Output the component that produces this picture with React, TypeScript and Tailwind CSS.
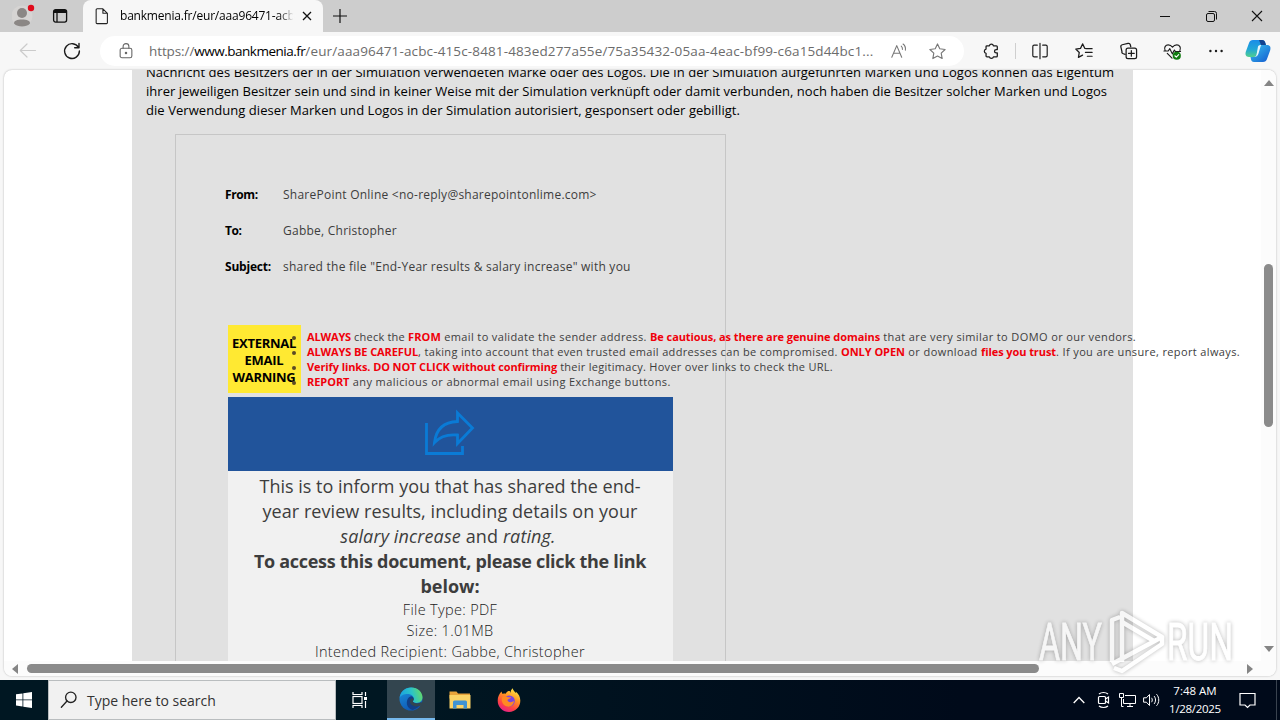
import type { ReactNode } from 'react';
import clsx from 'clsx';

interface Segment {
  text: string;
  tracking: string;
  alert?: boolean;
}

const warnings: Segment[][] = [
  [
    { text: 'ALWAYS', tracking: 'tracking-[-0.158px]', alert: true },
    { text: ' check the ', tracking: 'tracking-[0.213px]' },
    { text: 'FROM', tracking: 'tracking-[0.144px]', alert: true },
    { text: ' email to validate the sender address. ', tracking: 'tracking-[0.367px]' },
    { text: 'Be cautious, as there are genuine domains', tracking: 'tracking-[-0.076px]', alert: true },
    { text: ' that are very similar to DOMO or our vendors.', tracking: 'tracking-[0.388px]' },
  ],
  [
    { text: 'ALWAYS BE CAREFUL', tracking: 'tracking-[-0.106px]', alert: true },
    { text: ', taking into account that even trusted email addresses can be compromised. ', tracking: 'tracking-[0.344px]' },
    { text: 'ONLY OPEN', tracking: 'tracking-[-0.044px]', alert: true },
    { text: ' or download ', tracking: 'tracking-[0.42px]' },
    { text: 'files you trust', tracking: 'tracking-[-0.079px]', alert: true },
    { text: '. If you are unsure, report always.', tracking: 'tracking-[0.369px]' },
  ],
  [
    { text: 'Verify links. DO NOT CLICK without confirming', tracking: 'tracking-[-0.104px]', alert: true },
    { text: ' their legitimacy. Hover over links to check the URL.', tracking: 'tracking-[0.278px]' },
  ],
  [
    { text: 'REPORT', tracking: 'tracking-[-0.05px]', alert: true },
    { text: ' any malicious or abnormal email using Exchange buttons.', tracking: 'tracking-[0.42px]' },
  ],
];

const headers = [
  { label: 'From:', value: 'SharePoint Online <no-reply@sharepointonlime.com>', labelTracking: 'tracking-[-0.4px]' },
  { label: 'To:', value: 'Gabbe, Christopher', labelTracking: 'tracking-[-0.4px]' },
  { label: 'Subject:', value: 'shared the file "End-Year results & salary increase" with you', labelTracking: 'tracking-[-0.205px]' },
];

function Icon({ children, size = 20, className }: { children: ReactNode; size?: number; className?: string }) {
  return (
    <svg
      width={size}
      height={size}
      viewBox="0 0 20 20"
      fill="none"
      stroke="currentColor"
      strokeWidth="1.2"
      strokeLinecap="round"
      strokeLinejoin="round"
      className={clsx('shrink-0', className)}
    >
      {children}
    </svg>
  );
}

function TabStrip() {
  return (
    <div className="flex h-8 shrink-0 bg-[#cdcdcd]">
      <div className="flex w-[83px] items-center rounded-br-md bg-[#cdcdcd] pl-[12px]">
        <svg width="24" height="28" viewBox="0 0 24 28" className="shrink-0">
          <circle cx="10" cy="14" r="10.5" fill="#d6d4d3" />
          <circle cx="10" cy="11" r="5" fill="#8b8785" />
          <path d="M2 21.5c0-3 3-4 8-4s8 1 8 4c-2 2.200-5 3-8 3s-6-.8-8-3z" fill="#8b8785" />
          <circle cx="19" cy="6" r="3.200" fill="#e00b1c" />
        </svg>
        <svg width="16" height="16" viewBox="0 0 16 16" fill="none" stroke="#111" className="ml-[16px] shrink-0">
          <rect x="1.600" y="1.600" width="13" height="12.500" rx="2" strokeWidth="1.300" />
          <path d="M2 3.500h12.500" strokeWidth="3" />
          <path d="M5 4v10" strokeWidth="1.300" />
        </svg>
      </div>
      <div className="flex w-[240px] items-center rounded-t-lg bg-[#f7f7f7] pl-[10px]">
        <Icon size={18} className="text-[#222]">
          <path d="M4.500 2h6.500l5 5v10.500a1 1 0 0 1-1 1H4.500a1 1 0 0 1-1-1V3a1 1 0 0 1 1-1zM11 2v5h5" />
        </Icon>
        <span className="ml-[9px] w-[177px] overflow-hidden whitespace-nowrap bg-gradient-to-r from-black from-88% to-[#f7f7f7] to-98% bg-clip-text text-xs tracking-[-0.2px] text-transparent">
          bankmenia.fr/eur/aaa96471-acbc
        </span>
        <svg width="10" height="10" viewBox="0 0 10 10" stroke="#111" strokeWidth="1.300" className="ml-[5px] shrink-0">
          <path d="M1 1l8 8M9 1l-8 8" />
        </svg>
      </div>
      <div className="flex flex-1 items-center rounded-bl-md pl-[10px]">
        <svg width="14" height="14" viewBox="0 0 14 14" stroke="#111" strokeWidth="1.200">
          <path d="M7 0v14M0 7h14" />
        </svg>
      </div>
      <div className="flex items-center pr-[17px] text-[#111]">
        <svg width="10" height="10" viewBox="0 0 10 10" stroke="currentColor">
          <path d="M0 5.500h10" />
        </svg>
        <svg width="11" height="11" viewBox="0 0 11 11" fill="none" stroke="currentColor" className="ml-[36px]">
          <rect x=".5" y="2.500" width="8" height="8" rx="1.500" />
          <path d="M2.500.5h6a2 2 0 0 1 2 2v6" />
        </svg>
        <svg width="12" height="12" viewBox="0 0 12 12" stroke="currentColor" strokeWidth="1.100" className="ml-[34px]">
          <path d="M1 1l10 10M11 1L1 11" />
        </svg>
      </div>
    </div>
  );
}

function AddressBar() {
  return (
    <div className="flex h-[38px] shrink-0 items-center bg-[#f7f7f7] text-[#1b1b1b]">
      <Icon className="ml-[18px] text-[#cbcbcb]">
        <path d="M17.500 9.500h-15M9 3L2.300 9.500 9 16" />
      </Icon>
      <Icon className="ml-[24px]">
        <path d="M16.500 6.500A7.400 7.400 0 1 0 17.400 10M17 2.500v4.300h-4.300" strokeWidth="1.400" />
      </Icon>
      <div className="ml-[18px] flex h-[30px] w-[864px] items-center rounded-full bg-white pl-[17px]">
        <Icon size={18} className="text-[#666]">
          <rect x="3.500" y="7" width="13" height="10.500" rx="2" />
          <path d="M6.800 7V5a3.200 3.200 0 0 1 6.400 0v2" />
          <circle cx="10" cy="12.300" r=".8" fill="currentColor" />
        </Icon>
        <div className="ml-[14px] w-[726px] whitespace-nowrap text-[13.5px] text-[#6c6c6c]">
          <span className="tracking-[-0.1px]">https://</span>
          <span className="tracking-[-0.49px] text-black">www.bankmenia.fr</span>
          <span className="tracking-[0.133px]">/eur/aaa96471-acbc-415c-8481-483ed277a55e/75a35432-05aa-4eac-bf99-c6a15d44bc1...</span>
        </div>
        <Icon size={18} className="ml-[15px] text-[#777]">
          <path d="M2 17L7.500 4 13 17M4 12.500h7M12.500 4.500c1 .8 1.500 2.200 1.300 3.700M14.500 2.200c2 1.500 3 4 2.600 6.800" />
        </Icon>
        <Icon size={19} className="ml-[20px] text-[#777]">
          <path d="M10 2l2.400 5.100 5.600.8-4.100 3.900 1 5.600-4.900-2.700-4.900 2.700 1-5.600L2 7.900l5.600-.8z" />
        </Icon>
      </div>
      {/* extensions */}
      <Icon size={18} className="ml-[18px]">
        <path
          strokeWidth="1.400"
          d="M5.500 4.200h2.700a2.300 2.300 0 0 1 4.500 0h3.300a1 1 0 0 1 1 1v3.200h-1.200a1.900 1.900 0 0 0 0 3.800H17v3.300a1 1 0 0 1-1 1h-3.300a2.300 2.300 0 0 1-4.500 0H5.500a1 1 0 0 1-1-1v-2.900a2.400 2.400 0 0 1 0-4.700V5.200a1 1 0 0 1 1-1z"
        />
      </Icon>
      <div className="ml-[15px] h-4 w-px bg-[#cfcfcf]" />
      <Icon size={18} className="ml-[15px]">
        <path strokeWidth="1.300" d="M7 3.500H3.500a1.500 1.500 0 0 0-1.500 1.500v10a1.500 1.500 0 0 0 1.500 1.500H7M13 3.500h3.500A1.500 1.500 0 0 1 18 5v10a1.500 1.500 0 0 1-1.500 1.500H13M10 1.500v17" />
      </Icon>
      <Icon size={19} className="ml-[26px]">
        <path strokeWidth="1.300" d="M12 7L10.400 6.800 8 2 5.800 6.700.8 7.400l3.700 3.600-.9 5.200L8 13.800M12.500 7H18M11 11h7M13 15h5" />
      </Icon>
      <Icon size={19} className="ml-[25px]">
        <path strokeWidth="1.300" d="M6.500 13l-2-.6a2 2 0 0 1-1.400-2.400L2 5.300a2 2 0 0 1 1.400-2.400L9.500 1.500a2 2 0 0 1 2.400 1.400l.5 2.100" />
        <rect x="7.500" y="6.500" width="11" height="11" rx="2" strokeWidth="1.300" />
        <path strokeWidth="1.300" d="M13 9v6M10 12h6" />
      </Icon>
      <Icon size={19} className="ml-[25px]">
        <path strokeWidth="1.200" d="M2.200 9C.8 6 2.500 3 5.500 3c2 0 3.500 1 4.500 2.500C11 4 12.500 3 14.500 3c3 0 4.700 3 3.300 6M1 9.500h4.500L7.200 7l2.600 5.500 2.200-4 1 1.500h5.500M4.500 12l5 5" />
        <circle cx="14.500" cy="14.500" r="4.300" fill="#107c10" stroke="none" />
        <path d="M12.500 14.500l1.500 1.400 2.500-2.600" stroke="#fff" />
      </Icon>
      <Icon size={16} className="ml-[26px]">
        <g fill="currentColor" stroke="none">
          <circle cx="3" cy="10" r="1.500" />
          <circle cx="10" cy="10" r="1.500" />
          <circle cx="17" cy="10" r="1.500" />
        </g>
      </Icon>
      <CopilotLogo />
    </div>
  );
}

function CopilotLogo() {
  return (
    <svg width="26" height="24" viewBox="0 0 26 24" className="ml-[21px] shrink-0">
      <defs>
        <linearGradient id="cpA" x1="0" y1="0" x2="0" y2="1">
          <stop offset="0" stopColor="#1a8ce8" />
          <stop offset=".55" stopColor="#21a7d6" />
          <stop offset="1" stopColor="#52cf8d" />
        </linearGradient>
        <linearGradient id="cpB" x1="0" y1="0" x2="1" y2="1">
          <stop offset="0" stopColor="#38c5ef" />
          <stop offset="1" stopColor="#1458cf" />
        </linearGradient>
      </defs>
      <path d="M8 1h9c2 0 2.700 1 3.200 2.500L21 6h-4c-2 0-3 1-3.500 3l-2 7c-.4 1.300-1 2-2.500 2H4c-3.300 0-4-2.500-3.200-5.200L4 4c.6-2 2-3 4-3z" fill="url(#cpA)" />
      <path d="M14 1h3c2 0 2.700 1 3.200 2.500L21 6h-5z" fill="#12438f" />
      <path d="M18 23H9c-2 0-2.500-1-3-2.500L5.500 18H9c1.500 0 2.100-.7 2.500-2l2-7c.5-2 1.500-3 3.500-3h5c3.300 0 4 2.500 3.200 5.200L22 20c-.6 2-2 3-4 3z" fill="url(#cpB)" />
      <path d="M13 7.500c.5-1 1.500-1.500 3-1.500l-2.500 8.500c-.6 2-1.500 3-3.500 3.300.8-.3 1.200-1 1.500-1.800z" fill="#e9f7fc" />
    </svg>
  );
}

function Email() {
  return (
    <div className="ml-[43px] mt-[14px] h-[560px] w-[551px] border border-[#c6c6c6] pl-[49px] pt-[42px] text-[#3d3d3d]">
      {headers.map((h) => (
        <div key={h.label} className="flex h-9 items-center whitespace-nowrap text-xs">
          <span className={clsx('w-[58px] font-bold text-black', h.labelTracking)}>{h.label}</span>
          <span className="tracking-[0.245px]">{h.value}</span>
        </div>
      ))}

      <div className="ml-[3px] mt-[40px] flex">
        <div className="flex h-[68px] w-[73px] shrink-0 flex-col items-center justify-center bg-[#ffe932] pr-px pt-[3px] text-[13px] font-bold leading-[17px] tracking-[-0.28px] text-black">
          <span>EXTERNAL</span>
          <span>EMAIL</span>
          <span>WARNING</span>
        </div>
        {/* bullets hang over the edge of the yellow cell */}
        <ul className="-ml-[9px] pt-[5px]">
          {warnings.map((line, i) => (
            <li key={i} className="flex h-[15px] items-center whitespace-pre text-[11px]">
              <span className="mr-[11px] mt-[1px] size-1 rounded-full bg-[#5b4a25]" />
              {line.map((s) => (
                <span key={s.text} className={clsx(s.tracking, s.alert && 'font-bold text-[#f0000a]')}>
                  {s.text}
                </span>
              ))}
            </li>
          ))}
        </ul>
      </div>

      <div className="ml-[3px] mt-[4px] w-[445px] bg-[#f1f1f1] text-center">
        <div className="flex h-[74px] justify-center bg-[#21549b] pr-[4px] pt-[11px]">
          <svg width="54" height="48" viewBox="0 0 54 48" fill="none" stroke="#0a7bd6" strokeWidth="2.800">
            <path d="M4.500 15v30.500h36V38" />
            <path d="M35.500 5L50.500 20 35.500 35.500v-8.500C25 26 18 28.500 12.500 34.500 14 21.500 22 14 35.500 13.500z" />
          </svg>
        </div>
        <div className="whitespace-nowrap pr-px pt-[3px] text-lg leading-[25px]">
          <p>This is to inform you that has shared the end-</p>
          <p className="tracking-[0.058px]">year review results, including details on your</p>
          <p className="pr-[4px] tracking-[0.12px]">
            <em>salary increase</em> and <em>rating.</em>
          </p>
          <p className="font-bold tracking-[-0.3px]">To access this document, please click the link</p>
          <p className="font-bold">below:</p>
        </div>
        <div className="whitespace-nowrap pr-px text-[14.5px] font-light leading-[21px] tracking-[0.33px] text-[#222]">
          <p>File Type: PDF</p>
          <p>Size: 1.01MB</p>
          <p>Intended Recipient: Gabbe, Christopher</p>
        </div>
      </div>
    </div>
  );
}

function Arrow({ className }: { className: string }) {
  return (
    <svg width="10" height="6" viewBox="0 0 10 6" fill="#858585" className={clsx('shrink-0', className)}>
      <path d="M5 0l5 6H0z" />
    </svg>
  );
}

function Page() {
  return (
    <div className="mx-1 flex h-[606px] shrink-0 flex-col overflow-hidden rounded-lg bg-white shadow-[0_0_2px_rgba(0,0,0,0.3)]">
      <div className="flex h-[591px]">
        <div className="w-[1257px] overflow-hidden pl-[128px]">
          <div className="h-[620px] w-[1001px] bg-[#e1e1e1]">
            <div className="-mt-[7px] ml-[14px] whitespace-nowrap text-[13px] leading-[19px] text-black">
              <p className="tracking-[0.056px]">
                Nachricht des Besitzers der in der Simulation verwendeten Marke oder des Logos. Die in der Simulation aufgeführten Marken und Logos können das Eigentum
              </p>
              <p className="tracking-[0.023px]">
                ihrer jeweiligen Besitzer sein und sind in keiner Weise mit der Simulation verknüpft oder damit verbunden, noch haben die Besitzer solcher Marken und Logos
              </p>
              <p className="tracking-[0.058px]">
                die Verwendung dieser Marken und Logos in der Simulation autorisiert, gesponsert oder gebilligt.
              </p>
            </div>
            <Email />
          </div>
        </div>
        <div className="flex w-[15px] flex-col items-center bg-[#fcfcfc] pt-[10px]">
          <Arrow className="" />
          <div className="mt-[178px] h-[163px] w-[9px] rounded-full bg-[#8b8b8b]" />
          <Arrow className="mt-[219px] rotate-180" />
        </div>
      </div>
      <div className="flex h-[15px] items-center bg-[#fcfcfc] pl-[6px]">
        <Arrow className="-rotate-90" />
        <div className="ml-[7px] h-[9px] w-[1012px] rounded-full bg-[#8b8b8b]" />
        <Arrow className="ml-[206px] rotate-90" />
      </div>
    </div>
  );
}

function Taskbar() {
  return (
    <div className="flex h-10 shrink-0 items-center bg-gradient-to-r from-[#001722] from-30% to-[#000a1a] to-75% text-white">
      <div className="flex w-12 justify-center">
        <svg width="16" height="16" viewBox="0 0 16 16" fill="#fff">
          <path d="M0 2.300l6.500-.9v6.100H0zM7.300 1.300L16 0v7.500H7.300zM0 8.300h6.500v6.200L0 13.600zM7.300 8.300H16V16l-8.700-1.300z" />
        </svg>
      </div>
      <div className="flex h-10 w-[288px] items-center border border-[#b9bdbf] bg-[#f1f1f1] pl-[11px] text-[#222]">
        <Icon size={18}>
          <circle cx="12" cy="7" r="5.800" strokeWidth="1.500" />
          <path d="M7.800 11.200L1.500 18" strokeWidth="1.500" />
        </Icon>
        <span className="ml-[9px] pt-[2px] text-sm text-[#333]">Type here to search</span>
      </div>
      <div className="flex w-[51px] justify-center">
        <svg width="16" height="16" viewBox="0 0 16 16" fill="none" stroke="#fff" strokeWidth="1.200" className="-ml-[4px]">
          <rect x="1" y="4.500" width="9" height="7" />
          <path d="M1 0v2.500h9V0M1 16v-2.500h9V16M13.500 0v4M13.500 9v7" />
          <path d="M12 6.500h3" strokeWidth="3" />
        </svg>
      </div>
      <div className="flex h-10 w-[48px] items-center justify-center border-b-2 border-[#76b9ed] bg-[#33454f]">
        <svg width="24" height="24" viewBox="0 0 24 24">
          <defs>
            <linearGradient id="edA" x1="0" y1=".3" x2="1" y2=".1">
              <stop offset="0" stopColor="#1aa3e0" />
              <stop offset=".5" stopColor="#2bc3c8" />
              <stop offset="1" stopColor="#6bdc5c" />
            </linearGradient>
            <linearGradient id="edB" x1="0" y1="0" x2=".5" y2="1">
              <stop offset="0" stopColor="#1b93dd" />
              <stop offset="1" stopColor="#0f58b5" />
            </linearGradient>
          </defs>
          <circle cx="12" cy="12" r="11.500" fill="url(#edB)" />
          <path d="M.6 11C1.500 4.500 6.500.5 12.300.5 19 .5 23.500 5.500 23.500 10.300c0 3.700-2.700 5.700-5.900 5.700-2.200 0-3.800-.8-3.800-1.700 0-.6.900-1 .9-2.600 0-2.500-2.500-4.700-6-4.700C5 7 1.500 8.500.6 11z" fill="url(#edA)" />
          <path d="M8 17.500c-.8-4.500 1.500-8 4.500-8.300 1.500.6 2.200 1.500 2.200 2.500 0 1.600-.9 2-.9 2.600 0 .9 1.600 2.200 4.300 2.200 1.600 0 2.900-.4 3.900-1l.3.600c-1.600 3.200-4.600 6-8.500 6.800-3-.7-5.200-2.400-5.800-5.400z" fill="#123f86" />
          <path d="M14.700 11.700c0 1.600-.9 2-.9 2.600 0 1.300 2.200 2.200 4.300 2.200 1.800 0 3.300-.5 4.500-1.400l.9 3.400L20 19c-4 1.500-9.500-1-9-5 .2-1.800 1.500-3 3.700-2.300z" fill="#33454f" />
        </svg>
      </div>
      <div className="flex w-[49px] justify-center">
        <svg width="22" height="20" viewBox="0 0 22 20">
          <path d="M.5 1.500h7l1.500 2h12v5H.5z" fill="#e8a33a" />
          <path d="M.5 5h21v13.500H.5z" fill="#fbd366" />
          <path d="M4 18.500V12a1.500 1.500 0 0 1 1.500-1.500h11A1.500 1.500 0 0 1 18 12v6.500h-3.500V15h-7v3.500z" fill="#3f93d2" />
        </svg>
      </div>
      <div className="flex w-[50px] justify-center">
        <svg width="24" height="24" viewBox="0 0 24 24">
          <defs>
            <linearGradient id="ff" x1=".8" y1="0" x2=".3" y2="1">
              <stop offset="0" stopColor="#fff04a" />
              <stop offset=".4" stopColor="#ff9423" />
              <stop offset=".75" stopColor="#ff4045" />
              <stop offset="1" stopColor="#e4208c" />
            </linearGradient>
          </defs>
          <path d="M4.500 3.500c.2 1 .5 1.800 1.200 2.500 1-.5 2-.6 3-.3C10 3.500 11 3 12.500 3c.8.800 1 1.500 1 2.300 0-2.200.8-4 2.300-5 .2 2.200 1.700 3.200 3.200 4.700 0-.6 0-1-.3-1.600 3 2.300 4.600 5.600 4.600 9.100A11.300 11.300 0 0 1 12 24 11.300 11.300 0 0 1 .7 12.700C.7 9 2 6 4.500 3.500z" fill="url(#ff)" />
          <circle cx="12.200" cy="13" r="5.600" fill="#7a45e0" />
          <path d="M5 9.500c1.800-1.500 4-1.600 6-.2h3c0 1.500-3.500 1.500-3.500 3 .5 2.200 4 2.500 6.500.8-.5 4-3.500 6-6.500 5.500-4-.6-6.500-4.600-5.500-9.100z" fill="#ff8a22" />
        </svg>
      </div>
      <div className="ml-auto flex items-center">
        <svg width="12" height="8" viewBox="0 0 12 8" fill="none" stroke="#fff" strokeWidth="1.300">
          <path d="M.7 7L6 1.500 11.300 7" />
        </svg>
        <svg width="14" height="18" viewBox="0 0 14 18" fill="none" stroke="#fff" strokeWidth="1.200" className="ml-[12px]">
          <rect x="1.500" y="5.500" width="7" height="7" rx="1" />
          <path d="M8.500 8l3-2v6l-3-2M2 3c2.500-2 6.500-2 9 0M2 15c2.500 2 6.500 2 9 0" />
        </svg>
        <svg width="17" height="16" viewBox="0 0 17 16" fill="none" stroke="#fff" className="ml-[8px]">
          <path d="M6 3.500h10.500v8H4.500V7M8 14.500h6M11 11.500v3M.5 1.500h4v4h-4zM2.500 5.500v9h2" />
        </svg>
        <svg width="17" height="14" viewBox="0 0 17 14" fill="none" stroke="#fff" className="ml-[7px]">
          <path d="M.6 4.800h2.800L6.500 1.500v11L3.400 9.200H.6zM8.500 4.800c1 1.200 1 3.200 0 4.400M11 3c2 2.200 2 5.800 0 8M13.500 1.200c3 3.200 3 8.400 0 11.600" />
        </svg>
        <div className="ml-[7px] flex w-[56px] flex-col items-center whitespace-nowrap text-[11.5px] leading-[18px]">
          <span>7:48 AM</span>
          <span className="tracking-[-0.3px]">1/28/2025</span>
        </div>
        <svg width="17" height="17" viewBox="0 0 17 17" fill="none" stroke="#fff" strokeWidth="1.200" className="ml-[16px]">
          <path d="M1 1.500h15v11.500h-5L8.500 15.500 6 13H1z" />
        </svg>
        <div className="ml-[20px] h-10 w-px bg-[#39434f]" />
        <div className="w-[3px]" />
      </div>
    </div>
  );
}

function Watermark() {
  return (
    <svg
      width="210"
      height="76"
      viewBox="0 0 210 76"
      className="absolute left-[1030px] top-[602px] opacity-70 drop-shadow-[0_0_2px_rgba(0,0,0,0.4)]"
    >
      <g fill="#fff" stroke="#fff" strokeWidth=".8" fontFamily="Roboto, sans-serif" fontWeight="400" fontSize="51">
        <text x="9" y="58" textLength="63" lengthAdjust="spacingAndGlyphs">ANY</text>
        <text x="137" y="58" textLength="66" lengthAdjust="spacingAndGlyphs">RUN</text>
      </g>
      <g fill="none" stroke="#fff" strokeWidth="4.500" strokeLinejoin="round">
        <path d="M82 60V18l8-3M92 60V11l40 24-50 27" />
        <path d="M92 20l32 19M84 66l8 3 40-27v-7" />
      </g>
    </svg>
  );
}

export default function App() {
  return (
    <div className="relative flex h-screen w-[1280px] flex-col overflow-hidden bg-[#f7f7f7] font-['Open_Sans','Noto_Sans',sans-serif]">
      <TabStrip />
      <AddressBar />
      <Page />
      <div className="h-[4px] shrink-0" />
      <Taskbar />
      <Watermark />
    </div>
  );
}
